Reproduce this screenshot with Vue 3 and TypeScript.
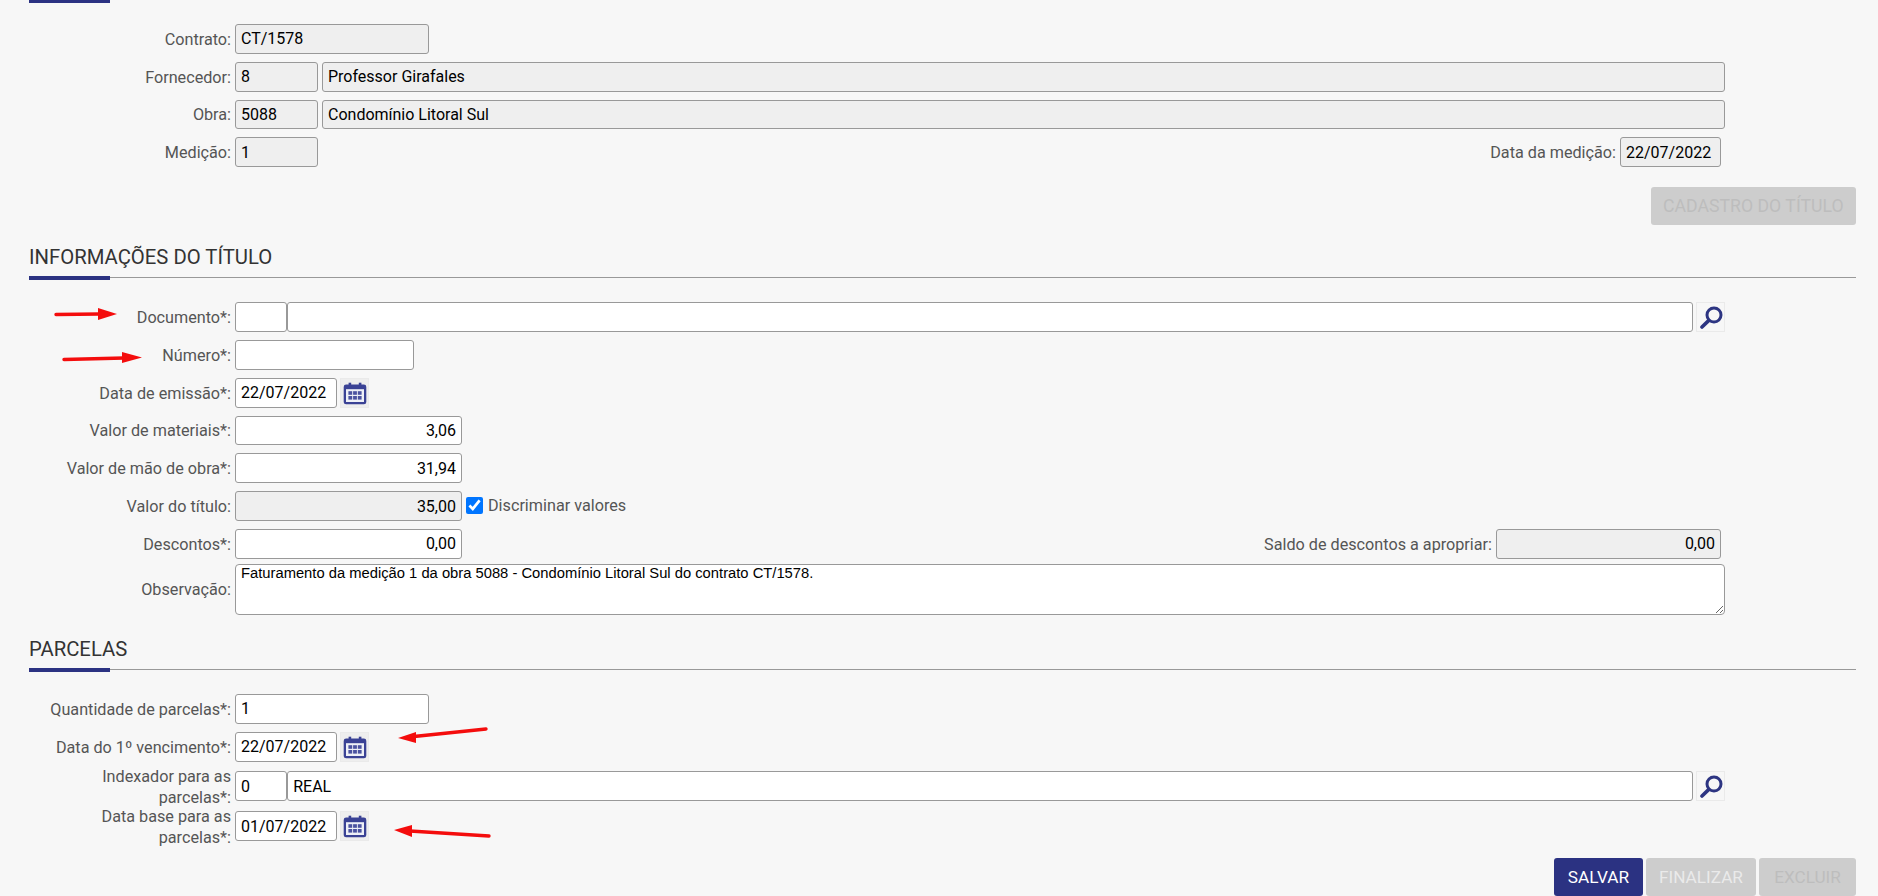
<script setup lang="ts">
const arrows: { shaft: string; head: string }[] = [
  { shaft: 'M56 314.5 L100 314', head: '98,308 117,314 98,320' },
  { shaft: 'M64 359.5 L124 358', head: '122,352 142,357.5 122,363' },
  { shaft: 'M486 729 L414 736.5', head: '416,732 398,738 416,743' },
  { shaft: 'M489 836 L410 831', head: '412,825 394,830 412,837' }
]
const observacao = 'Faturamento da medição 1 da obra 5088 - Condomínio Litoral Sul do contrato CT/1578.'
</script>

<template>
  <div class="page">
    <div class="top-accent"></div>

    <div class="rows first">
      <div class="row">
        <label class="lbl">Contrato:</label>
        <input class="inp w-md off" readonly value="CT/1578" />
      </div>
      <div class="row">
        <label class="lbl">Fornecedor:</label>
        <input class="inp w-sm off" readonly value="8" />
        <input class="inp grow off next" readonly value="Professor Girafales" />
      </div>
      <div class="row">
        <label class="lbl">Obra:</label>
        <input class="inp w-sm off" readonly value="5088" />
        <input class="inp grow off next" readonly value="Condomínio Litoral Sul" />
      </div>
      <div class="row">
        <label class="lbl">Medição:</label>
        <input class="inp w-sm off" readonly value="1" />
        <span class="spacer"></span>
        <label class="lbl-free">Data da medição:</label>
        <input class="inp w-date-end off end" readonly value="22/07/2022" />
      </div>
    </div>

    <div class="actions one">
      <button class="btn off-dark" disabled>CADASTRO DO TÍTULO</button>
    </div>

    <div class="section-head"><h2>INFORMAÇÕES DO TÍTULO</h2></div>

    <div class="rows">
      <div class="row">
        <label class="lbl">Documento*:</label>
        <input class="inp w-code" />
        <input class="inp grow tight" />
        <button class="icon-btn"><svg viewBox="0 0 24 24" class="ico"><use href="#lens-icon" /></svg></button>
      </div>
      <div class="row">
        <label class="lbl">Número*:</label>
        <input class="inp w-num" />
      </div>
      <div class="row">
        <label class="lbl">Data de emissão*:</label>
        <input class="inp w-date" value="22/07/2022" />
        <button class="icon-btn cal"><svg viewBox="0 0 24 24" class="ico"><use href="#cal-icon" /></svg></button>
      </div>
      <div class="row">
        <label class="lbl">Valor de materiais*:</label>
        <input class="inp w-val num" value="3,06" />
      </div>
      <div class="row">
        <label class="lbl">Valor de mão de obra*:</label>
        <input class="inp w-val num" value="31,94" />
      </div>
      <div class="row">
        <label class="lbl">Valor do título:</label>
        <input class="inp w-val num off" readonly value="35,00" />
        <input class="check" type="checkbox" checked />
        <span class="check-text">Discriminar valores</span>
      </div>
      <div class="row">
        <label class="lbl">Descontos*:</label>
        <input class="inp w-val num" value="0,00" />
        <span class="spacer"></span>
        <label class="lbl-free">Saldo de descontos a apropriar:</label>
        <input class="inp w-saldo num off end" readonly value="0,00" />
      </div>
      <div class="row area-row">
        <label class="lbl">Observação:</label>
        <textarea class="area" :value="observacao"></textarea>
      </div>
    </div>

    <div class="section-head second"><h2>PARCELAS</h2></div>

    <div class="rows">
      <div class="row">
        <label class="lbl">Quantidade de parcelas*:</label>
        <input class="inp w-md" value="1" />
      </div>
      <div class="row">
        <label class="lbl">Data do 1º vencimento*:</label>
        <input class="inp w-date" value="22/07/2022" />
        <button class="icon-btn cal"><svg viewBox="0 0 24 24" class="ico"><use href="#cal-icon" /></svg></button>
      </div>
      <div class="row spaced">
        <label class="lbl">Indexador para as parcelas*:</label>
        <input class="inp w-code" value="0" />
        <input class="inp grow tight" value="REAL" />
        <button class="icon-btn"><svg viewBox="0 0 24 24" class="ico"><use href="#lens-icon" /></svg></button>
      </div>
      <div class="row spaced more">
        <label class="lbl">Data base para as parcelas*:</label>
        <input class="inp w-date" value="01/07/2022" />
        <button class="icon-btn cal"><svg viewBox="0 0 24 24" class="ico"><use href="#cal-icon" /></svg></button>
      </div>
    </div>

    <div class="actions two">
      <button class="btn primary">SALVAR</button>
      <button class="btn off-light" disabled>FINALIZAR</button>
      <button class="btn off-dark" disabled>EXCLUIR</button>
    </div>

    <svg class="defs" width="0" height="0">
      <defs>
        <g id="lens-icon">
          <circle cx="15" cy="10" r="7" fill="none" stroke="#2d3582" stroke-width="3" />
          <path d="M9.6 15.6 L3 22" stroke="#2d3582" stroke-width="3.6" stroke-linecap="round" fill="none" />
        </g>
        <g id="cal-icon">
          <rect x="0.7" y="3.6" width="22.6" height="19.7" rx="2.4" fill="#3a4295" />
          <rect x="3" y="8.2" width="18" height="12.8" fill="#eef0f7" />
          <rect x="5.6" y="1.7" width="2.6" height="4.4" fill="#3a4295" />
          <rect x="15.8" y="1.7" width="2.6" height="4.4" fill="#3a4295" />
          <g fill="#4a52a0">
            <rect x="5.4" y="10.2" width="3.8" height="3.6" /><rect x="10.1" y="10.2" width="3.8" height="3.6" /><rect x="14.8" y="10.2" width="3.8" height="3.6" />
            <rect x="5.4" y="15" width="3.8" height="3.6" /><rect x="10.1" y="15" width="3.8" height="3.6" /><rect x="14.8" y="15" width="3.8" height="3.6" />
          </g>
        </g>
      </defs>
    </svg>

    <svg class="marks" viewBox="0 0 1878 896" width="1878" height="896">
      <g v-for="(a, i) in arrows" :key="i">
        <path :d="a.shaft" stroke="#f40d0d" stroke-width="3.4" stroke-linecap="round" fill="none" />
        <polygon :points="a.head" fill="#f40d0d" />
      </g>
    </svg>
  </div>
</template>

<style>
html, body { margin: 0; background: #f7f7f7; }
</style>

<style scoped>
.page {
  position: relative;
  box-sizing: border-box;
  width: 1878px;
  height: 896px;
  overflow: hidden;
  padding: 0 22px 0 29px;
  background: #f7f7f7;
  font-family: Roboto, "Liberation Sans", sans-serif;
  color: #555;
}
.top-accent { width: 81px; height: 3px; background: #2b3282; }
.rows { display: flex; flex-direction: column; gap: 8px; width: 1696px; }
.rows.first { margin-top: 21px; }
.row { display: flex; align-items: center; height: 29.8px; }
.row.spaced { margin-top: 1.5px; }
.row.spaced.more { margin-top: 2.5px; }
.area-row { height: 51px; margin-top: -2.8px; }
.lbl {
  box-sizing: border-box;
  flex: none;
  width: 206px;
  padding: 1px 4px 0 4px;
  text-align: right;
  font-size: 16.2px;
  line-height: 21px;
  color: #555;
}
.lbl-free { font-size: 16.2px; margin: 1px 4px 0 0; color: #555; }
.spacer { flex: 1; }
.inp {
  box-sizing: border-box;
  height: 100%;
  padding: 0 5px;
  border: 1px solid #999;
  border-radius: 3px;
  background: #fff;
  color: #000;
  font: 16px Roboto, "Liberation Sans", sans-serif;
  outline: none;
  min-width: 0;
}
.off { background: #efefef; }
.num { text-align: right; }
.grow { flex: 1; }
.next { margin-left: 4px; }
.tight { margin-left: 0.6px; }
.end { margin-right: 4px; }
.w-md { width: 194px; }
.w-sm { width: 83px; }
.w-code { width: 51.6px; }
.w-num { width: 179px; }
.w-date { width: 102px; }
.w-date-end { width: 101px; }
.w-val { width: 227px; }
.w-saldo { width: 225px; }
.icon-btn {
  box-sizing: border-box;
  flex: none;
  width: 29px;
  height: 100%;
  margin-left: 3px;
  padding: 0;
  border: 1px solid #eaeaea;
  background: #f7f7f7;
  display: flex;
  align-items: center;
  justify-content: center;
}
.cal { background: #eeeeee; margin-left: 3px; }
.ico { width: 24px; height: 24px; display: block; }
.check { width: 17px; height: 17px; margin: 0 5px 2px 4px; accent-color: #0075ff; }
.check-text { font-size: 16.2px; color: #555; margin-bottom: 2px; }
.area {
  box-sizing: border-box;
  flex: 1;
  height: 100%;
  padding: 0 5px;
  border: 1px solid #999;
  border-radius: 4px;
  background: #fff;
  color: #000;
  font: 14.75px/17px "Liberation Sans", Arial, sans-serif;
  outline: none;
}
.actions { display: flex; justify-content: flex-end; gap: 3px; }
.actions.one { margin-top: 20px; }
.actions.two { position: absolute; right: 22px; top: 858px; }
.btn {
  box-sizing: border-box;
  height: 38px;
  padding: 0 12.4px;
  border: none;
  border-radius: 3px;
  font: 17.7px Roboto, "Liberation Sans", sans-serif;
}
.two .btn { padding: 0; font-size: 17.2px; }
.two .primary { width: 89px; }
.two .off-light { width: 110px; }
.two .off-dark { width: 97px; }
.primary { background: #2b3282; color: #fff; }
.off-dark { background: #cdcdcd; color: #bdbdbd; }
.off-light { background: #cdcdcd; color: #eaeaea; }
.section-head {
  position: relative;
  box-sizing: border-box;
  height: 30px;
  margin: 23px 0 24px;
  border-bottom: 1px solid #999;
}
.section-head.second { margin-top: 24.6px; margin-bottom: 24.5px; }
.section-head::after {
  content: "";
  position: absolute;
  left: 0;
  bottom: -3px;
  width: 81px;
  height: 4px;
  background: #2b3282;
}
h2 {
  margin: 0;
  font-size: 20.3px;
  font-weight: 400;
  line-height: 18px;
  color: #333;
}
.defs { position: absolute; }
.marks { position: absolute; left: 0; top: 0; pointer-events: none; }
</style>
